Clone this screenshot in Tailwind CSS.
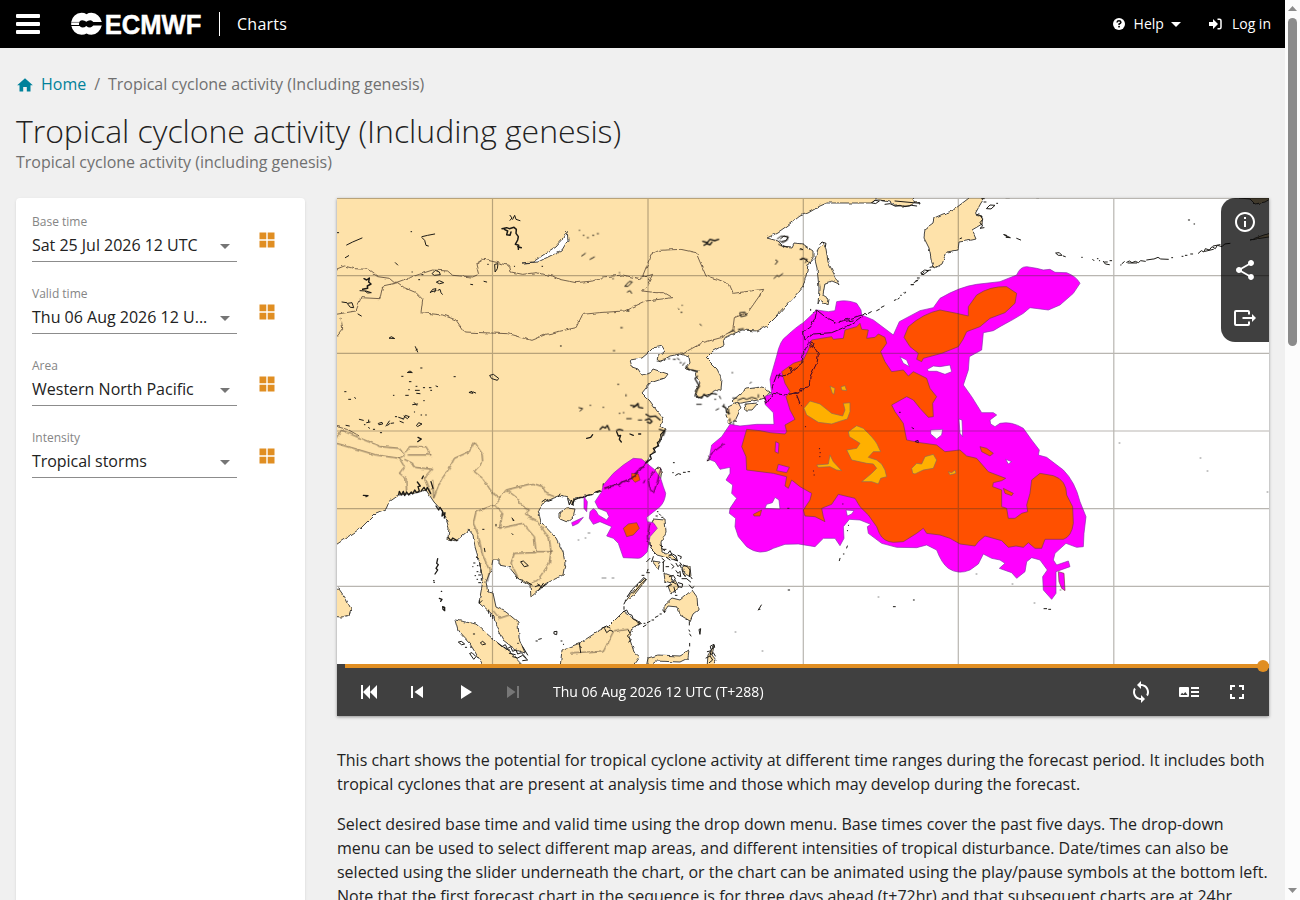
<!DOCTYPE html>
<html lang="en">
<head>
<meta charset="utf-8">
<title>Tropical cyclone activity (Including genesis) | ECMWF</title>
<script src="https://cdn.jsdelivr.net/npm/@tailwindcss/browser@4"></script>
</head>
<body class="h-screen overflow-hidden bg-[#f0f0f0] font-['Open_Sans',sans-serif] text-[#222]">
<div class="flex h-full">
<div class="flex h-full w-[1285px] shrink-0 flex-col overflow-hidden">
  <header class="flex h-12 shrink-0 items-center bg-black pl-4 pr-[14px] text-white">
    <svg class="mr-[31px] h-5 w-6" viewBox="0 0 24 20" fill="#fff"><rect width="24" height="4" rx="1"/><rect y="8" width="24" height="4" rx="1"/><rect y="16" width="24" height="4" rx="1"/></svg>
    <svg class="h-6 w-[131px] overflow-visible" viewBox="0 0 131 24">
      <path fill="#fff" d="M10.500 .8Q13.500 .8 15.500 2.200Q17.500 .8 20.500 .8Q28.500 1.500 30.800 10V13.500Q28.500 22 20.500 22.800Q17.500 22.800 15.500 21.400Q13.500 22.800 10.500 22.800Q2 22 .2 13.500V10Q2 1.500 10.500 .8Z"/>
      <path fill="#000" d="M8 11.800Q8 8.200 11.300 8.200Q13.700 8.200 15.300 9.700Q16.800 8.200 19.200 8.200Q21 8.200 22.300 10H31V13.600H22.300Q21 15.400 19.200 15.400Q16.800 15.400 15.300 13.900Q13.700 15.400 11.300 15.400Q9.500 15.400 8.700 14H0V12.900H8Z"/>
      <path stroke="#666" stroke-width=".8" d="M0 10.400H8"/>
      <text x="33.800" y="21.600" fill="#fff" stroke="#fff" stroke-width=".5" font-family="Liberation Sans" font-weight="700" font-size="27" textLength="96.500" lengthAdjust="spacingAndGlyphs">ECMWF</text>
    </svg>
    <div class="ml-[17px] mr-[17px] h-6 w-px bg-white"></div>
    <span class="text-base tracking-[.25px]">Charts</span>
    <div class="ml-auto flex items-center text-sm">
      <svg class="mr-[9px] size-3" viewBox="0 0 12 12"><circle cx="6" cy="6" r="6" fill="#fff"/><path d="M4 4.500Q4.200 2.800 6 2.800T7.900 4.400Q7.800 5.400 6.100 6V7" fill="none" stroke="#000" stroke-width="1.500"/><rect x="5.200" y="7.900" width="1.700" height="1.500"/></svg>
      <span>Help</span>
      <svg class="ml-[7px] mr-[28px] h-[5px] w-[10px]" viewBox="0 0 10 5"><path fill="#fff" d="M0 0H10L5 5Z"/></svg>
      <svg class="mr-[10px] h-3 w-[13px]" viewBox="0 0 13 12"><path fill="#fff" d="M0 4H4V1L9 6L4 11V8H0Z"/><path fill="none" stroke="#fff" stroke-width="1.500" d="M8.500 1.300H10.500Q12 1.300 12 2.800V9.200Q12 10.700 10.500 10.700H8.500"/></svg>
      <span>Log in</span>
    </div>
  </header>

  <nav class="mt-6 flex h-6 shrink-0 items-center pl-[17px] text-base tracking-[-.02px] text-[#707070]">
    <svg class="mr-2 mt-[2px] h-[14px] w-4" viewBox="0 0 16 14"><path fill="#00829b" d="M8 .3L15.800 7.300H13.500V13.500H9.800V9H6.200V13.500H2.500V7.300H.2Z"/></svg>
    <a class="text-[#00829b]">Home</a><span class="mx-2">/</span><span>Tropical cyclone activity (Including genesis)</span>
  </nav>
  <h1 class="mt-[15px] h-10 shrink-0 pl-4 text-[32px] font-light leading-10 tracking-[-.045px]">Tropical cyclone activity (Including genesis)</h1>
  <p class="-mt-px h-6 shrink-0 pl-4 text-base tracking-[-.02px] text-[#707070]">Tropical cyclone activity (including genesis)</p>

  <main class="mt-6 flex min-h-0 flex-1 gap-8 pl-4">
    <aside class="h-[760px] w-[289px] shrink-0 rounded bg-white px-4 pt-[15px] shadow">
      <div class="flex h-[72px]"><div class="h-[49px] w-[205px] border-b border-[#8c8c8c]"><div class="h-4 pt-px text-xs leading-4 text-[#858585]">Base time</div><div class="flex items-center justify-between pr-[7px]"><span class="leading-8 tracking-[-.02px]">Sat 25 Jul 2026 12 UTC</span><svg class="mt-0.5 h-[5px] w-[10px]" viewBox="0 0 10 5"><path fill="#757575" d="M0 0H10L5 5Z"/></svg></div></div><svg class="ml-[22px] mt-[19px] size-4" viewBox="0 0 16 16" fill="#e08e22"><path d="M.5.500H7.300V7.300H.5ZM8.700.500H15.500V7.300H8.700ZM.5 8.700H7.300V15.500H.5ZM8.700 8.700H15.500V15.500H8.700Z"/></svg></div>
      <div class="flex h-[72px]"><div class="h-[49px] w-[205px] border-b border-[#8c8c8c]"><div class="h-4 pt-px text-xs leading-4 text-[#858585]">Valid time</div><div class="flex items-center justify-between pr-[7px]"><span class="leading-8">Thu 06 Aug 2026 12 U...</span><svg class="mt-0.5 h-[5px] w-[10px]" viewBox="0 0 10 5"><path fill="#757575" d="M0 0H10L5 5Z"/></svg></div></div><svg class="ml-[22px] mt-[19px] size-4" viewBox="0 0 16 16" fill="#e08e22"><path d="M.5.500H7.300V7.300H.5ZM8.700.500H15.500V7.300H8.700ZM.5 8.700H7.300V15.500H.5ZM8.700 8.700H15.500V15.500H8.700Z"/></svg></div>
      <div class="flex h-[72px]"><div class="h-[49px] w-[205px] border-b border-[#8c8c8c]"><div class="h-4 pt-px text-xs leading-4 text-[#858585]">Area</div><div class="flex items-center justify-between pr-[7px]"><span class="leading-8">Western North Pacific</span><svg class="mt-0.5 h-[5px] w-[10px]" viewBox="0 0 10 5"><path fill="#757575" d="M0 0H10L5 5Z"/></svg></div></div><svg class="ml-[22px] mt-[19px] size-4" viewBox="0 0 16 16" fill="#e08e22"><path d="M.5.500H7.300V7.300H.5ZM8.700.500H15.500V7.300H8.700ZM.5 8.700H7.300V15.500H.5ZM8.700 8.700H15.500V15.500H8.700Z"/></svg></div>
      <div class="flex h-[72px]"><div class="h-[49px] w-[205px] border-b border-[#8c8c8c]"><div class="h-4 pt-px text-xs leading-4 text-[#858585]">Intensity</div><div class="flex items-center justify-between pr-[7px]"><span class="leading-8 tracking-[-.05px]">Tropical storms</span><svg class="mt-0.5 h-[5px] w-[10px]" viewBox="0 0 10 5"><path fill="#757575" d="M0 0H10L5 5Z"/></svg></div></div><svg class="ml-[22px] mt-[19px] size-4" viewBox="0 0 16 16" fill="#e08e22"><path d="M.5.500H7.300V7.300H.5ZM8.700.500H15.500V7.300H8.700ZM.5 8.700H7.300V15.500H.5ZM8.700 8.700H15.500V15.500H8.700Z"/></svg></div>
    </aside>

    <section class="w-[932px] shrink-0">
      <div class="relative h-[518px] bg-[#404040] shadow-[0_1px_3px_rgba(0,0,0,.4)]">
        <svg class="block h-[466px] w-[932px] bg-white" viewBox="337 198 932 466" stroke-linejoin="round">
          <defs>
            <filter id="rough" filterUnits="userSpaceOnUse" x="330" y="190" width="950" height="480"><feTurbulence type="fractalNoise" baseFrequency=".16" numOctaves="2" seed="4"/><feDisplacementMap in="SourceGraphic" scale="3.500" xChannelSelector="R" yChannelSelector="G"/></filter>
          </defs>
          <g filter="url(#rough)" fill="#fee2aa" stroke="#333" stroke-width=".9">
            <!-- mainland -->
            <path d="M330 190H915L913 200L920 204L917 203L908 206L895 206L890 202L880 200L875 200L872 203L850 203L827 203L820 206L808 213L800 216L787 226L777 233L767 238L778 241L783 246L792 247L794 243L803 244L813 251L813 259L808 266L806 276L803 286L795 296L777 316L767 326L757 331L742 330L733 334L723 339L724 345L713 351L706 358L717 369L722 379L721 389L713 393L698 398L695 391L700 383L696 376L698 371L685 369L690 363L689 357L680 354L670 356L660 362L657 358L665 351L662 346L653 348L648 353L642 358L630 360L632 367L638 369L642 375L650 373L653 369L668 374L665 378L650 383L642 393L650 401L657 411L663 418L660 426L665 429L660 442L652 453L646 463L635 473L620 484L605 490L590 495L575 498L573 505L568 498L559 496L544 502L538 510L541 522L556 538L563 552L565 563L563 575L549 582L539 590L531 597L530 585L518 578L509 567L499 565L499 559L493 559L491 570L486 582L488 592L493 593L496 607L506 612L518 622L519 638L525 653L516 650L503 640L496 627L494 617L479 603L483 580L479 560L475 547L473 535L469 530L456 541L448 539L449 528L444 513L434 502L426 490L416 493L399 495L389 502L386 509L376 513L361 528L343 540L330 549Z"/>
            <!-- Sri Lanka, Hainan, Taiwan -->
            <path d="M330 590L339 589L346 599L351 609L349 615L342 617L330 616Z"/><path d="M560 513L567 508L575 509L573 517L567 522L560 519Z"/><path d="M657 468L662 470L660 482L653 493L648 484L650 474Z"/>
            <!-- Sakhalin, Kamchatka -->
            <path d="M818 249L823 243L826 249L828 262L839 284L832 281L825 283L823 295L829 299L828 305L820 300L818 305L819 288L817 268L815 260Z"/><path d="M975 190L969 198L952 211L943 214L934 218L933 223L925 229L924 238L929 248L932 263L935 268L942 264L947 252L958 250L959 242L972 240L976 239L972 230L982 224L983 216L975 214L981 203L990 190Z"/>
            <path d="M1221 190H1275V236L1250 240L1275 231V196L1265 202L1255 204L1250 199L1240 198Z"/>
            <!-- Japan -->
            <path d="M770 392L762 387L746 389L732 401L735 404L758 400L765 398ZM745 404L758 403L752 410L746 410ZM728 407L738 402L741 408L735 421L729 424L726 415ZM815 310L835 322L848 318L830 332L812 333L803 340L803 331Z"/><path d="M803 345L805 358L800 366L782 377L773 388L768 398L775 401L788 395L800 391L808 385L812 368L819 357L816 347L812 342Z"/>
            <!-- Sumatra, Borneo, Sulawesi, Philippines -->
            <path d="M455 620L476 624L494 640L510 652L525 668H485L470 644L458 631Z"/>
            <path d="M560 668L562 650L580 643L600 630L608 627L624 611L634 619L641 623L632 628L629 637L634 652L640 657L632 668Z"/><path d="M646 668L648 658L658 655L680 656L689 651L688 658L680 662L655 661Z"/>
            <path d="M653 519L665 520L666 532L661 542L662 551L672 555L678 561L668 558L657 555L651 549L649 535ZM652 561L660 562L658 569ZM664 573L672 576L671 583L665 581ZM683 566L690 566L691 577L685 574ZM668 586L676 580L680 587L671 594ZM664 605L672 598L680 600L692 590L697 597L698 610L693 614L690 621L680 615L678 607L668 606L664 612ZM625 601L635 588L645 578L646 580L635 594Z"/>
            <path d="M707 668L708 655L714 646L712 655L716 660L713 668Z"/>
            <path fill="#fff" d="M522 263L533 262L555 247L564 237L567 231L568 240L562 250L550 256L538 262Z"/>
          </g>

          <!-- state borders -->
          <g filter="url(#rough)" fill="none" stroke="#5c4a3a" stroke-width="2.500">
            <g transform="translate(336,196) scale(.333333)"><path d="M0 220L25 210L55 218L95 220L125 242L160 247L175 260L185 258L215 247L250 235L290 222L335 225L350 238L410 243L428 235L420 205L443 190L520 208L525 228L560 235L600 230L650 240L670 250L720 260L770 255L800 243L860 237L910 248L950 235L935 265L920 285L960 290L985 290L1010 305L930 315L865 345L790 350L740 355L720 395L630 415L585 433L515 413L385 408L360 372L320 357L255 350L260 310L240 290L205 275L185 260L140 270L132 308L75 305L60 345L0 355M15 365L20 400L0 425M918 243L935 243L920 240L940 190L945 175L970 163L1035 160L1080 170L1110 240L1145 250L1180 265L1192 292L1280 280L1270 300L1235 350L1195 365L1190 405L1155 425L1100 440L1035 475M0 690L35 700L70 720"/></g>
            <g transform="translate(336,430) scale(.333333)"><path d="M0 25L15 0L85 30L135 50L190 55L205 75L190 85L120 75L20 45L0 40M190 85L205 110L190 130L210 145L212 190M205 88L230 100L235 112L290 118L265 145L285 195M290 150L293 205L315 150L340 115L355 85L400 65L415 38L438 70L440 95L415 125L440 145L470 190L492 205L475 225L420 245L412 280L425 310L440 375L460 420L455 455M208 70L220 50L270 50L285 75L215 75M492 205L510 180L590 160L620 170L630 190L655 200M515 182L545 205L555 225L580 240L565 255L600 270L640 325L645 365M475 225L500 250L490 295L560 280L595 320L600 365L645 365L640 400L605 450L580 465M600 368L535 370L525 400L545 440M470 540L490 565L520 555"/></g>
            <g transform="translate(570,430) scale(.333333)"><path d="M0 672L100 665L130 605L175 598"/></g>
          </g>

          <!-- lakes, rivers and small islets -->
          <g fill="none" stroke="#1c1a16" stroke-width="3" stroke-linecap="round">
            <g transform="translate(336,196) scale(.333333)">
              <path stroke-width="4.500" d="M498 98L512 95L520 98L534 94L541 100L540 112L547 122L545 132L538 145L548 148L547 160M545 152L556 155M505 100L515 105L512 116L522 118L525 108M84 248L92 252L100 246L98 258L105 264L94 270L95 277L80 280"/>
              <path d="M522 58L528 66L522 73M530 70L536 58L540 70L552 74M32 147L50 138L78 126M28 185L38 179M258 122L275 118L296 114M258 125L266 133L270 148L277 150M178 200L185 207M72 284L90 285L106 290L95 291L88 286M289 232L298 223L310 228L313 236L296 238ZM302 258L310 254L323 260L312 263ZM283 290L290 280L300 278L296 288M284 288L300 284M306 283L312 280L315 290L319 295M477 205L486 203L484 218L478 227ZM35 322L48 320L53 335L44 334ZM18 318L32 320M66 354L76 360M238 452L245 468M240 462L244 460M160 426L166 422L175 427ZM462 538L472 535L488 547L484 553L468 548ZM400 589L408 586L410 591ZM412 588L419 591M404 265L410 266M444 256L452 258M248 251h3M258 236h3M4 110h4M225 107h2M228 228h1M455 205h2M535 211h1M618 211h2M673 450h3"/>
              <path d="M215 529L222 525L228 529ZM197 541h4M220 557h5M254 516h4M240 571h3M262 575h4M280 575l5 0M284 583h3M300 570l5 2M218 581h2M238 583h12M242 592l10 1M354 542h4M26 587h4M38 610h6M56 605l3 2M172 598h2M209 598h8M230 626L245 624M235 620L242 628M263 614h2M235 648h1M255 657h2M269 657h2M70 670L82 673M92 680L102 678M98 672v5M128 682L138 679L140 684L130 686ZM150 690L160 675M155 688l6 -5M165 682l8 -1M178 662h4M188 664L200 668M202 670L208 658L220 662L214 668L204 660M192 676L202 680M242 688L248 680L258 684L246 691ZM85 686h2M98 694l2 3M112 700h4M30 688l10 2M133 710h4"/>
            </g>
            <g transform="translate(336,430) scale(.333333)">
              <path stroke-width="4" d="M246 22L256 27L245 35M82 196L96 197L90 200M188 194L190 184L196 195L202 184L206 197L212 186L218 195L226 186L230 192L236 180L242 188L250 183L246 170L253 168L244 156M256 182L264 172L270 182L274 172L284 190M262 138L258 146M285 155L291 175M300 228L308 240L312 232L320 245L318 258L327 248L325 264M336 322L345 332L350 324L362 331M305 386L302 400L307 404L300 415L305 420L297 432M293 452h1M294 457h1M316 484h1M310 505L318 508L314 514M320 530l6 2v10l-5 -4z"/>
              <path d="M421 382h4M413 399h4M410 410h1M424 407h2M432 400v8M423 425h3M435 420v8M428 435h6M436 445v6M417 437h2M423 448h2M428 458h6M555 395L562 393L577 407L566 410ZM528 264L534 272L530 270M440 298h4M480 283v5M528 311l3 3M445 355l2 10M540 440L550 448M556 458L560 452M572 455L588 465M605 462L618 472M608 480L622 460M615 475L636 458M598 470L610 465M430 512v8L438 512M458 540v10M464 552v8M470 556v10M368 636l8 -2 10 8 -8 2zM388 652h4M402 670L408 668L420 680L414 687ZM404 652h2M412 612h4M434 638L440 634L449 642L440 644ZM486 640L498 650L508 644L514 656L524 650L530 664L540 660L545 672L556 668L570 684M530 680L545 684L560 676L575 690L560 692M520 670L538 674M505 652L520 662M655 605L663 604L662 614L655 612ZM600 633h4M608 628L616 626M545 640h2M560 650L575 675M675 633h3M682 643h1M618 215L628 208L636 214L648 210M695 206L700 225L706 210L712 226M672 192l-5 8M555 450h4"/></g>
            <g transform="translate(570,196) scale(.333333)">
              <path stroke-width="4" d="M398 136L412 140L420 130L434 134L446 130M402 148L410 143L420 146L426 138M375 600L382 580L388 570L375 548L382 540M380 602L395 606L402 595L412 602L425 592L438 594M348 512L358 522M366 522L378 526M200 628L190 634M182 628L196 630L204 622L206 634L218 636M228 655L240 662L256 660L270 672M226 672L238 668L246 676L240 682L232 678M90 700L98 692L106 696L112 688L118 702M140 703L148 700L158 703M268 700L285 705L280 718M458 630L468 636L470 648L478 652"/>
              <path d="M617 192L623 196L616 205M612 247L622 238L626 242L638 233M622 128L634 120L655 122L652 132L638 140L628 134M626 145L642 152M690 160h5M696 186L712 190L706 200M690 190h6M165 270L178 256L187 258L175 270ZM172 288L180 284L185 292M510 350L525 348L530 358L514 362ZM325 338l2 2M333 349h3M336 328h1M390 385l4 3M172 345h5M152 395h5M130 464h4M28 103h1M40 118h2M52 125h3M68 118h3M82 113h3M35 180L46 172M60 190L73 183M148 230h1M128 248h2M478 410L488 402L495 408M505 400L520 398M262 495h8M280 490h6M295 488h4M310 490h6M322 487l6 4M330 500h4M344 500l-6 8M380 625h14M434 610h3M448 600l4 8M438 642l8 -4M462 625v8M476 640v15M540 562l4 -4M588 602L600 620L615 600L625 590L636 595M650 596l7 1M486 530h2M27 635L38 638L30 645M60 628h2M99 634h2M168 596v4M143 565h3M160 650h2M148 652h2M170 668h14M205 672h10M504 612L520 606L530 610L545 604L560 608M488 606h12M565 596v8M438 595h2M480 668v8M490 680v8M485 695h4"/></g>
            <g transform="translate(570,430) scale(.333333)">
              <path stroke-width="4" d="M50 25L62 22L68 14M140 5L145 18L152 16L148 28L154 36M180 12L190 16M206 12h6M285 0L272 14L274 28L262 38L266 48L250 55L256 66L240 75L244 86L228 98L222 112L208 118L200 130L190 136L180 148L160 154L145 165L130 166L105 174M100 162v8M90 182L78 186M66 194L52 196L44 202L30 202L12 210L8 224"/>
              <path d="M310 98h3M308 128h2M317 136L325 131L332 133M340 127h6M354 125h5M412 92L422 88M416 78L420 84M430 66L436 60M446 50L458 40M258 258h4M268 252l4 4M275 262h4M262 245h2M250 285h4M230 322L234 340M250 380L245 395M240 385L230 395M230 428h8M234 418L232 424M222 442L205 460L185 480L172 500M228 448L210 466L190 490M216 436h6M166 514L162 522M270 345l8 5M275 355L284 362M280 358h8M294 370L300 362L306 374L296 378M308 372L318 378L322 392L312 388M324 376L334 380L332 386M276 385L284 392L278 398M288 410h8M290 382L300 390M304 402L312 410L306 415M318 400L324 410L330 404L334 414M280 395v30M330 398L336 406M318 422L324 430L330 424L332 440L322 436M336 418L340 432L346 440M340 405L352 410L360 420L358 440M336 446h14M298 440L310 436L316 446L308 456L318 462M325 458L338 462L336 472L324 470L322 462M290 470L305 464M312 472L316 488M352 448L362 456M362 440l4 6M358 465L366 475L372 470M316 496h5M282 545h3M270 552h4M256 562L264 558M246 570h5M232 578L240 574M220 590L228 585M222 580h3M204 582h4M175 600L180 610L172 618L184 630L176 636M200 575L210 580L205 586M162 530v8M160 545L170 540L176 552L186 556L190 568L200 572M104 596L110 608L120 600L128 604M358 575v10M357 600l2 4M359 612l4 6M359 640v8M388 598L392 596L390 612ZM565 540L574 525M566 538h4M422 648L432 643L434 652L424 658ZM412 665L424 662L420 676L430 668L436 678M408 684L420 678L428 690L418 698M28 638L32 668M30 650l4 2M95 595L110 588L120 594"/></g>
            <g transform="translate(780,196) scale(.333333)"><path d="M620 37L630 27L645 28L634 38ZM650 22h3M612 18h6M672 116L680 118L678 124L690 125ZM710 127L722 132M603 60L608 70L600 80L608 90L600 97L612 95M590 55L605 62M540 128L545 126M828 171L838 170L846 178L836 178ZM850 180l6 2M905 184h2M938 190l4 4M952 188h2M958 194h1M970 196L976 204L988 206M974 198h8M990 194h5M1022 207h1M1026 203L1033 197M1040 199L1048 195L1056 200L1066 196L1075 200L1082 194L1096 196M1044 201L1070 201M1100 192L1120 189M1122 189L1134 184L1142 189L1165 190M1175 185h3M1206 181h3M1216 178h5M1232 174h6M1255 172L1264 164L1272 168L1276 158L1288 162L1296 152L1306 158L1312 148L1326 152L1334 144L1350 142M1275 166L1300 160M1300 150L1320 146M1225 72h4M1242 84h2M275 20L285 13L298 15L288 22ZM315 25L330 23L345 30L360 28L375 32L395 28L410 30M306 14h8M345 15L420 22M423 230L434 222L446 224L430 236ZM412 246h6M408 254h4M395 266h6M372 290l2 2M362 298h2M120 145L126 138L138 142L136 152M62 190L72 188L85 198M62 158l6 3M450 214L460 212M605 8h8M678 5h10M770 5h6M2 128L12 120L24 124L18 134L6 136M10 150l12 4"/></g>
            <g transform="translate(760,260) scale(.333333)"><path d="M485 44L492 36M500 32L512 30M453 74h4M462 68L474 60M435 97h2M403 121L408 119M414 117l4 -3M350 152L358 148M364 142L372 138M325 160L334 155M305 168L315 160L320 164M255 192L270 186L285 182L300 172M152 148v3M160 158h5M265 796h1M262 812h1M262 858l-2 6M250 882h2M240 895L238 902M85 990h4M460 1020h3M400 1040h6M852 1046h8M866 1048h6"/></g>
          </g>

          <!-- activity probability areas -->
          <g transform="translate(760,260) scale(.333333)" stroke="#7a3c46" stroke-width="2">
            <path fill="#f0f" stroke="#8a2bb0" fill-rule="evenodd" d="M170 150L205 155L225 152L230 125Q260 118 290 130L303 150L305 165L340 180L400 225L418 185L480 152L520 143L540 115Q600 80 650 73L720 65L770 45Q780 20 800 20L830 25L850 30L870 28L885 37L920 38Q950 50 960 70L940 100L900 135L865 150L810 143L790 160L760 178L720 200L700 212L670 218L665 270L628 290L625 330L610 375L635 410L665 458L700 458L710 465L690 480L692 492L705 500L720 490Q755 483 790 505L815 540L838 570L835 585L860 592L910 630Q945 665 960 725L978 770L972 820L970 860L950 862L918 850L885 880L880 900L890 915L925 903L930 920L888 935L888 1000L875 1018L850 990L848 950L862 930L840 900L815 893L800 905L795 935L770 955L755 938L718 925L735 910L720 900L695 895L670 882L655 912L630 930Q595 945 565 925Q545 910 530 870L500 855L470 863L410 862L365 850L325 820L322 800L332 793L300 780L268 778L250 800L252 835L240 857L225 835L190 835L165 860L115 852L75 853L40 865Q0 890 -40 860L-65 830L-75 800L-73 775L-92 760L-90 745L-70 715L-85 700L-82 675L-102 660L-90 640L-90 622L-120 628L-135 605L-153 598L-145 555L-115 530L-90 493L-60 498L-10 493L42 493L40 458L15 433L17 408L35 403L30 358L50 288Q60 240 80 228Q110 200 130 188ZM420 290L440 300L448 320L430 310ZM502 328L520 318L540 320L570 315L575 335L555 343L530 334L505 334ZM512 510L548 508L545 525L530 537L512 522ZM597 477L606 480L608 530L600 520ZM737 598L755 605L745 612ZM45 712L57 720L60 747L15 745L20 733L37 728ZM258 750L282 752L275 762L262 768Z"/>
            <path fill="#f0f" d="M895 935L912 940L915 992L905 985L897 965Z"/>
            <path fill="#ff5000" fill-rule="evenodd" d="M155 240L215 230L220 238L250 235L255 210L290 200L300 190L305 208L325 210L320 235L345 232L355 222L375 232L380 250L362 275L375 305L395 335L430 330L445 348L460 335L500 355L510 385L530 410L518 430L520 470L505 472L480 445L460 420L440 410L395 435L405 455L430 490L440 540L480 548L530 555L555 575L600 570L620 588L650 595L685 635L737 655L725 662L700 668L698 680L725 690L725 740L740 745L745 775L765 775L785 760L803 755L800 735L810 700L815 660L840 640L880 647Q920 660 920 705L938 740L940 790Q935 830 910 838L855 838L845 865L825 865L805 848L790 862L768 858L745 862L725 842L675 828L655 845L645 858L600 852L570 835L540 825L500 820L490 805L470 820L430 845L400 847Q370 845 358 820L350 800L325 765L300 740L285 715L235 703L215 733L185 745L190 770L195 785L165 770L135 768L130 750L150 720L155 700L120 680L95 660L85 685L75 678L80 650L40 640L0 635L-40 630L-42 590L-55 560L-45 525L-40 508L0 512L30 518L75 522L80 515L75 495L105 478L90 450L78 410L90 395L75 370L65 335L100 310L130 300L145 270ZM47 545L57 550L55 580L45 575ZM55 613L88 622L80 638L50 632Z"/>
            <path fill="#ff5000" d="M432 232L445 200Q490 160 540 150L590 160L625 168L625 140L650 105Q690 78 740 80L770 100L765 130L735 158L690 175L660 200L620 215Q610 240 595 260L545 280L490 295L485 305L470 298L475 280L450 260ZM660 560L680 565L700 580L690 588L665 575ZM730 685L760 700L755 707L735 700ZM-20 763L5 750L0 768L-18 768Z"/>
            <path fill="#ffb000" stroke="#8a6a58" d="M132 445L150 423L180 432L215 460L248 468L255 450L250 430L270 428L270 455L262 477L245 482L215 492L175 487L140 465ZM265 515L290 497L310 505L325 520Q350 545 355 560L362 575L340 575L325 592L350 600L365 612L375 630L380 650L362 655L355 672L335 665L305 665L335 640L350 625L340 612L320 610L275 600L260 570L290 565L300 550L268 530ZM455 625L470 610L485 612L495 590L520 583L530 600L520 625L490 630L465 642L458 640ZM170 615L205 612L210 585L220 605L245 632L230 630L210 620L175 622ZM210 378L225 385L222 403L217 400ZM243 380L255 377L260 392L245 390ZM565 635L575 638L585 630L588 640L570 645Z"/>
          </g>
          <g transform="translate(570,430) scale(.333333)" stroke="#8a2bb0" stroke-width="2">
            <path fill="#f0f" d="M100 165L130 130L160 105L190 85L215 87L228 98L255 120L272 145L280 170L287 190Q285 215 270 230L230 262L232 275L250 278L262 295L240 320L232 365Q215 385 205 385L160 383L145 340L130 325L110 318L125 290L90 275L70 283L58 265L60 245L70 236L78 242L85 255L110 270L117 260L110 245L85 235L75 215L95 185ZM42 200L52 215L50 245L42 235ZM5 278L40 262L25 280L8 288Z"/>
            <path fill="#ff5000" stroke="#7a3c46" d="M185 130L205 132L210 150L195 157L185 145ZM160 295L175 282L200 278L208 295L190 315L170 320Z"/>
          </g>

          <!-- coastlines seen through the areas -->
          <g filter="url(#rough)" fill="none" stroke="#3a0a2c" stroke-width="3">
            <g transform="translate(760,260) scale(.333333)"><path d="M170 150L195 170L230 188L290 170L305 165M305 170L270 195L215 218L160 222L135 240L130 215L150 200L165 175L170 150M145 245L160 260L175 285L170 310L150 350L148 380L125 385L115 400L100 400L75 405L40 400L20 430L10 405M145 250L130 280L125 310L75 350L50 345L35 385M150 245L162 250L158 262L148 256M88 322L96 324L92 332ZM60 340L55 355M100 400L130 390M125 395L135 382M250 185L280 180M110 405L120 430M110 412h3M124 440h3"/></g>
            <g transform="translate(570,430) scale(.333333)"><path stroke-width="4" d="M232 92L222 110L210 115L200 130L185 145L160 155L150 164L130 166L100 176"/><path d="M272 115L262 155L250 190L238 170L235 150L255 120M240 280L232 320L240 350M412 92L425 70L462 42M225 150L220 160"/></g>
          </g>
          <g transform="translate(760,260) scale(.333333)" fill="none" stroke="#3a0a2c" stroke-width="3" stroke-linecap="round"><path d="M178 566h1M180 578h1M179 590h1M160 633h1M162 645h1M248 732h1M136 500h1M418 457h3M456 503l5 3M466 544l8 -3 1 6zM83 745h4"/></g>

          <!-- graticule -->
          <g stroke="#3c3428" stroke-opacity=".36" stroke-width="1.200"><path d="M492.500 198V664M648 198V664M803.300 198V664M958.300 198V664M1113.800 198V664M337 198.500H1269M337 275.600H1269M337 353.400H1269M337 431H1269M337 508.700H1269M337 586.300H1269"/></g>
          <g stroke="#888" stroke-width="1" stroke-linecap="round"><path d="M1119 443h1M1200 458h1M1207 471h1M1267 492h1M878 597h1M1034 603h1M1060 590h1M976 574h1M1012 584h1M735 632h1M762 651h1M788 590h1M602 578h4M585 538h1M578 540h1M588 533h2M612 578h2"/></g>
        </svg>
        <div class="absolute left-2 top-[466px] h-1 w-[924px] bg-[#e08e22]"></div>
        <div class="absolute left-[920px] top-[462px] size-3 rounded-full bg-[#e08e22]"></div>
        <div class="absolute right-0 top-0 flex h-36 w-12 flex-col items-center justify-around rounded-l-[14px] bg-black/75">
          <svg class="size-6" viewBox="0 0 24 24" fill="#fff"><path d="M11 7h2v2h-2zm0 4h2v6h-2zm1-9C6.480 2 2 6.480 2 12s4.480 10 10 10 10-4.480 10-10S17.520 2 12 2zm0 18c-4.410 0-8-3.590-8-8s3.590-8 8-8 8 3.590 8 8-3.590 8-8 8z"/></svg>
          <svg class="size-6" viewBox="0 0 24 24" fill="#fff"><path d="M18 16.080c-.76 0-1.440.3-1.960.77L8.910 12.700c.05-.23.09-.46.09-.7s-.04-.47-.09-.7l7.050-4.110c.54.5 1.250.81 2.040.81 1.660 0 3-1.340 3-3s-1.340-3-3-3-3 1.340-3 3c0 .24.040.47.090.7L8.040 9.810C7.500 9.310 6.790 9 6 9c-1.660 0-3 1.340-3 3s1.340 3 3 3c.79 0 1.500-.31 2.040-.81l7.120 4.160c-.05.21-.08.43-.08.650 0 1.610 1.310 2.920 2.920 2.920s2.920-1.310 2.920-2.920-1.310-2.920-2.920-2.920z"/></svg>
          <svg class="size-6" viewBox="0 0 24 24" fill="none" stroke="#fff" stroke-width="2"><path d="M16 8.500V6Q16 5 15 5H3Q2 5 2 6V18Q2 19 3 19H15Q16 19 16 18V15.500M9.500 12H20"/><path d="M19 8L23 12L19 16Z" fill="#fff" stroke="none"/></svg>
        </div>
        <div class="mt-1 flex h-12 items-center pl-5 pr-5 text-white">
          <svg class="mr-6 size-6" viewBox="0 0 24 24" fill="#fff"><path d="M20 5V19L13 12M6 5V19H4V5M13 5V19L6 12"/></svg>
          <svg class="mr-6 size-6" viewBox="0 0 24 24" fill="#fff"><path d="M6 18V6H8V18H6M9.500 12L18 6V18L9.500 12Z"/></svg>
          <svg class="mr-6 size-6" viewBox="0 0 24 24" fill="#fff"><path d="M8 5v14l11-7z"/></svg>
          <svg class="size-6" viewBox="0 0 24 24" fill="#777"><path d="M16 18H18V6H16M6 18L14.500 12L6 6V18Z"/></svg>
          <span class="ml-7 text-sm">Thu 06 Aug 2026 12 UTC (T+288)</span>
          <svg class="ml-auto mr-6 size-6" viewBox="0 0 24 24" fill="#fff"><path d="M12 4V1L8 5l4 4V6c3.310 0 6 2.690 6 6 0 1.010-.25 1.970-.7 2.800l1.460 1.460C19.540 15.030 20 13.570 20 12c0-4.420-3.580-8-8-8zm0 14c-3.310 0-6-2.690-6-6 0-1.010.25-1.970.7-2.800L5.240 7.740C4.460 8.970 4 10.430 4 12c0 4.420 3.580 8 8 8v3l4-4-4-4v3z"/></svg>
          <svg class="mr-6 size-6" viewBox="0 0 24 24" fill="#fff"><path fill-rule="evenodd" d="M3 7H11Q12 7 12 8V16Q12 17 11 17H3Q2 17 2 16V8Q2 7 3 7ZM3.500 15H10.500L8.300 12L6.500 14L5 12.800Z"/><path d="M14 7h8v2h-8zM14 11h8v2h-8zM14 15h8v2h-8z"/></svg>
          <svg class="size-6" viewBox="0 0 24 24" fill="#fff"><path d="M7 14H5v5h5v-2H7v-3zm-2-4h2V7h3V5H5v5zm12 7h-3v2h5v-5h-2v3zM14 5v2h3v3h2V5h-5z"/></svg>
        </div>
      </div>
      <div class="mt-8 space-y-4 whitespace-nowrap text-base tracking-[-.007px]">
        <p>This chart shows the potential for tropical cyclone activity at different time ranges during the forecast period. It includes both<br>tropical cyclones that are present at analysis time and those which may develop during the forecast.</p>
        <p>Select desired base time and valid time using the drop down menu. Base times cover the past five days. The drop-down<br>menu can be used to select different map areas, and different intensities of tropical disturbance. Date/times can also be<br>selected using the slider underneath the chart, or the chart can be animated using the play/pause symbols at the bottom left.<br>Note that the first forecast chart in the sequence is for three days ahead (t+72hr) and that subsequent charts are at 24hr</p>
      </div>
    </section>
  </main>
</div>
<div class="flex h-full w-[15px] flex-col items-center bg-[#fcfcfc] pb-[7px] pt-[6px]">
  <svg class="h-[5px] w-[9px]" viewBox="0 0 9 5"><path fill="#8b8b8b" d="M0 5L4.500 0L9 5Z"/></svg>
  <div class="mt-[7px] h-[328px] w-[9px] rounded-full bg-[#8b8b8b]"></div>
  <svg class="mt-auto h-[5px] w-[9px]" viewBox="0 0 9 5"><path fill="#8b8b8b" d="M0 0H9L4.500 5Z"/></svg>
</div>
</div>
</body>
</html>
